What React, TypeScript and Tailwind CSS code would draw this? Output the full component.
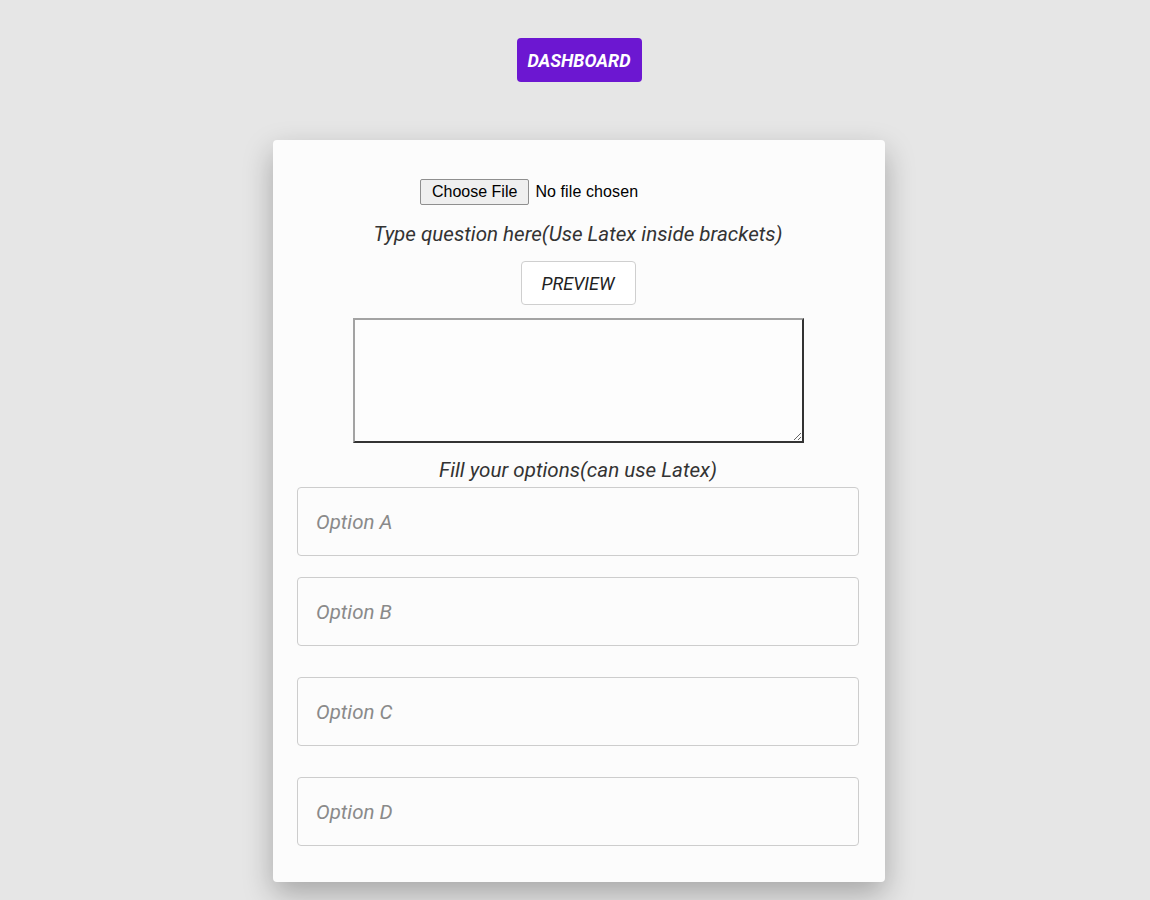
import { useState } from "react";

const roboto = { fontFamily: "Roboto, 'Noto Sans', sans-serif" };

export default function App() {
  const [options, setOptions] = useState<string[]>(["", "", "", ""]);
  const [question, setQuestion] = useState("");
  const labels = ["A", "B", "C", "D"];
  const gaps = ["mt-[3px]", "mt-[21px]", "mt-[31px]", "mt-[31px]"];

  return (
    <div className="min-h-screen bg-[#e6e6e6] flex flex-col items-center pl-2" style={roboto}>
      <button className="mt-[38px] h-[44px] w-[125px] rounded bg-[#6c17d1] text-white italic font-bold text-[18px]">
        DASHBOARD
      </button>

      <div className="mt-[58px] w-[612px] bg-[#fcfcfc] rounded-sm pl-6 pr-[26px] pt-[39px] pb-[36px] shadow-[0_12px_30px_rgba(0,0,0,0.28)] flex flex-col">
        {/* file picker */}
        <div className="ml-[123px] flex items-center h-[26px] text-[16px] text-black" style={{ fontFamily: "'Liberation Sans', Arial, sans-serif" }}>
          <span className="h-[26px] px-[11px] flex items-center bg-[#efefef] border border-[#8f8f8f] rounded-[2px]">Choose File</span>
          <span className="ml-[6px] tracking-[0.1px]">No file chosen</span>
        </div>

        <p className="mt-[15px] text-center italic text-[20.6px] leading-[28px] text-[#333]">
          Type question here(Use Latex inside brackets)
        </p>

        <div className="mt-[13px] flex justify-center">
          <button className="h-[44px] w-[115px] border border-[#cfcfcf] rounded bg-white italic text-[18px] text-[#222]">
            PREVIEW
          </button>
        </div>

        <div className="mt-[13px] flex justify-center">
          <textarea
            value={question}
            onChange={(e) => setQuestion(e.target.value)}
            className="w-[451px] h-[125px] bg-[#fdfdfd] border-2 border-t-[#a3a3a3] border-l-[#a3a3a3] border-r-[#333] border-b-[#333] outline-none"
          />
        </div>

        <p className="mt-[13px] text-center italic text-[20.6px] leading-[28px] text-[#333]">
          Fill your options(can use Latex)
        </p>

        {labels.map((l, i) => (
          <input
            key={l}
            value={options[i]}
            onChange={(e) => {
              const next = [...options];
              next[i] = e.target.value;
              setOptions(next);
            }}
            placeholder={"Option " + l}
            className={`${gaps[i]} h-[69px] w-full rounded border border-[#cdcdcd] bg-[#fcfcfc] px-[18px] italic text-[20.5px] text-[#333] placeholder:text-[#8a8a8a] outline-none`}
          />
        ))}
      </div>
    </div>
  );
}
